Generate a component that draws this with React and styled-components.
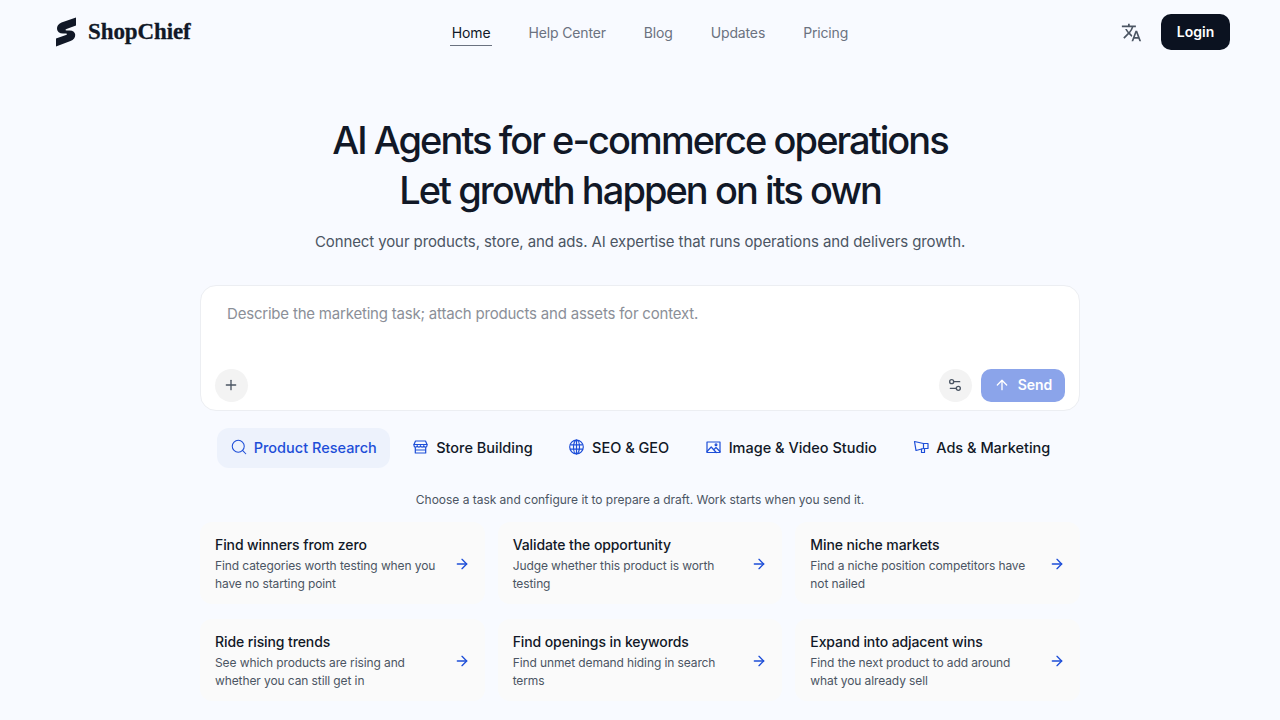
import React from "react";
import styled, { createGlobalStyle } from "styled-components";
import { ArrowRight, ArrowUp, Plus, Search, Settings2 } from "lucide-react";
import { MdTranslate } from "react-icons/md";

const GlobalStyle = createGlobalStyle`
  * { box-sizing: border-box; }
  html, body { margin: 0; padding: 0; }
  body {
    background: #f8faff;
    color: #111827;
    font-family: Inter, "Liberation Sans", sans-serif;
    height: 720px;
    overflow: hidden;
  }
`;

/* ----- header ----- */
const Header = styled.header`
  display: grid;
  grid-template-columns: 1fr auto 1fr;
  align-items: center;
  height: 64px;
  padding: 0 50px 0 55px;
`;

const LogoWrap = styled.div`
  display: flex;
  align-items: center;
  gap: 11px;
`;

const LogoText = styled.span`
  font-family: "Liberation Serif", serif;
  font-weight: 700;
  font-size: 23px;
  letter-spacing: -0.1px;
  color: #111827;
  -webkit-text-stroke: 0.3px #111827;
`;

const Nav = styled.nav`
  display: flex;
  gap: 34px;
  padding: 2px 0 0 15px;
`;

const NavLink = styled.a`
  font-size: 14px;
  line-height: 24px;
  padding: 0 2px;
  letter-spacing: -0.15px;
  color: ${({ $active }) => ($active ? "#111827" : "#6b7280")};
  border-bottom: 1px solid ${({ $active }) => ($active ? "#6b7280" : "transparent")};
`;

const HeaderRight = styled.div`
  display: flex;
  justify-content: flex-end;
  align-items: center;
  gap: 19px;
  color: #4b5563;
`;

const LoginBtn = styled.button`
  width: 69px;
  height: 36px;
  border: 0;
  border-radius: 10px;
  padding: 0 0 2px;
  background: #0b1220;
  color: #fff;
  font: 600 14px Inter, sans-serif;
`;

/* ----- hero ----- */
const Main = styled.main`
  width: 880px;
  margin: 0 auto;
  padding-top: 51px;
`;

const Title = styled.h1`
  margin: 0;
  text-align: center;
  font-size: 38px;
  line-height: 50px;
  font-weight: 500;
  letter-spacing: -1.95px;
  color: #111827;
`;

const Subtitle = styled.p`
  margin: 15px 0 0;
  text-align: center;
  font-size: 15px;
  line-height: 24px;
  letter-spacing: -0.1px;
  color: #4b5563;
`;

/* ----- composer ----- */
const Composer = styled.div`
  margin-top: 31px;
  height: 126px;
  background: #fff;
  border: 1px solid #eceef2;
  border-radius: 16px;
  padding: 17px 14px 8px;
  display: flex;
  flex-direction: column;
  justify-content: space-between;
`;

const Placeholder = styled.div`
  padding-left: 12px;
  font-size: 15px;
  line-height: 22px;
  letter-spacing: -0.2px;
  color: #8b8f98;
`;

const ComposerBar = styled.div`
  display: flex;
  align-items: center;
  gap: 9px;
`;

const RoundBtn = styled.button`
  width: 33px;
  height: 33px;
  border: 0;
  border-radius: 50%;
  background: #f3f3f3;
  color: #4b5563;
  display: flex;
  align-items: center;
  justify-content: center;
  padding: 0 1px 1px 0;
  margin-left: ${({ $push }) => ($push ? "auto" : "0")};
`;

const SendBtn = styled.button`
  width: 84px;
  height: 33px;
  border: 0;
  border-radius: 10px;
  padding: 0 0 2px;
  background: #8ba4ea;
  color: #fff;
  font: 600 14px Inter, sans-serif;
  display: flex;
  align-items: center;
  justify-content: center;
  gap: 8px;
`;

/* ----- tabs ----- */
const Tabs = styled.div`
  display: flex;
  justify-content: center;
  gap: 8.4px;
  margin-top: 17px;
`;

const Tab = styled.button`
  height: 40px;
  padding: 0 13px 2px 15px;
  border: 0;
  border-radius: 12px;
  background: ${({ $active }) => ($active ? "#edf2fc" : "transparent")};
  color: ${({ $active }) => ($active ? "#1d4ed8" : "#111827")};
  font: 500 14.5px Inter, sans-serif;
  display: flex;
  align-items: center;
  gap: 7px;
  svg {
    color: #1d4ed8;
  }
`;

const SearchGlyph = styled(Search)`
  margin: 0 -1px 0 -2px;
`;

const Hint = styled.p`
  margin: 22px 0 0;
  text-align: center;
  font-size: 12px;
  line-height: 20px;
  letter-spacing: -0.025px;
  color: #4b5563;
`;

/* ----- task cards ----- */
const Grid = styled.div`
  display: grid;
  grid-template-columns: repeat(3, 1fr);
  gap: 15px 13px;
  margin-top: 12px;
`;

const Card = styled.div`
  height: 82px;
  padding: 14px 14px 0 15px;
  background: #fafafa;
  border-radius: 12px;
  display: flex;
  align-items: flex-start;
  justify-content: space-between;
`;

const CardBody = styled.div`
  width: 224px;
`;

const CardTitle = styled.div`
  font-size: 14px;
  line-height: 18px;
  font-weight: 500;
  letter-spacing: -0.1px;
  color: #111827;
`;

const CardText = styled.div`
  margin-top: 3px;
  font-size: 12px;
  line-height: 18px;
  letter-spacing: -0.1px;
  color: #4b5563;
`;

const CardArrow = styled.span`
  display: flex;
  align-self: center;
  margin: -13px 1px 0 0;
  color: #1d4ed8;
`;

/* ----- drawn icons ----- */
const TabSvg = ({ children }) => (
  <svg
    width="16"
    height="16"
    viewBox="0 0 16 16"
    fill="none"
    stroke="currentColor"
    strokeWidth="1.2"
    strokeLinejoin="round"
    strokeLinecap="round"
  >
    {children}
  </svg>
);

const StoreIcon = () => (
  <TabSvg>
    <path d="M2.5 2h10l1.5 3.5v1a1.6 1.6 0 0 1-3.2 0 1.65 1.65 0 0 1-3.3 0 1.65 1.65 0 0 1-3.3 0 1.6 1.6 0 0 1-3.2 0v-1z" />
    <path d="M1 5.5h13M2.3 8.5V14h10.4V8.5M2.3 11h10.4" />
  </TabSvg>
);

const GlobeIcon = () => (
  <TabSvg>
    <circle cx="7.5" cy="8" r="6.8" />
    <ellipse cx="7.5" cy="8" rx="3" ry="6.8" />
    <path d="M7.5 1.2v13.6M1.5 5.8h12M1.5 10.2h12" />
  </TabSvg>
);

const ImageIcon = () => (
  <TabSvg>
    <path d="M1 3h13v10.5H1z" />
    <path d="M1 12.5l4.2-4.5 5 5.5M8 10.5l2-2 4 4" />
    <circle cx="10" cy="5.8" r="0.9" />
  </TabSvg>
);

const MegaphoneIcon = () => (
  <TabSvg>
    <path d="M1.5 2.5l9 2h4.5v5h-4.5l-7.5 2z" />
    <path d="M10.5 4.5v5M8.5 10v3.5h3V9.5" />
  </TabSvg>
);

const tabs = [
  { label: "Product Research", icon: <SearchGlyph size={18} strokeWidth={1.4} />, active: true },
  { label: "Store Building", icon: <StoreIcon /> },
  { label: "SEO & GEO", icon: <GlobeIcon /> },
  { label: "Image & Video Studio", icon: <ImageIcon /> },
  { label: "Ads & Marketing", icon: <MegaphoneIcon /> },
];

const tasks = [
  ["Find winners from zero", "Find categories worth testing when you have no starting point"],
  ["Validate the opportunity", "Judge whether this product is worth testing"],
  ["Mine niche markets", "Find a niche position competitors have not nailed"],
  ["Ride rising trends", "See which products are rising and whether you can still get in"],
  ["Find openings in keywords", "Find unmet demand hiding in search terms"],
  ["Expand into adjacent wins", "Find the next product to add around what you already sell"],
];

const Logo = () => (
  <svg width="22" height="30" viewBox="0 0 22 30">
    <path
      fill="#111827"
      d="M21 0.5 V8.5 L11.5 12 C10 12.6 10.2 13.4 11.5 13.4 H14.5 C22 13.4 22 21.5 15.5 24 L1 29.5 V21.5 L11 18 C12.5 17.4 12.3 16.6 11 16.6 H8 C0.5 16.6 0 8 6.5 5.5 Z"
    />
  </svg>
);

export default function App() {
  return (
    <>
      <GlobalStyle />
      <Header>
        <LogoWrap>
          <Logo />
          <LogoText>ShopChief</LogoText>
        </LogoWrap>
        <Nav>
          <NavLink $active>Home</NavLink>
          <NavLink>Help Center</NavLink>
          <NavLink>Blog</NavLink>
          <NavLink>Updates</NavLink>
          <NavLink>Pricing</NavLink>
        </Nav>
        <HeaderRight>
          <MdTranslate size={21} />
          <LoginBtn>Login</LoginBtn>
        </HeaderRight>
      </Header>
      <Main>
        <Title>
          AI Agents for e-commerce operations
          <br />
          Let growth happen on its own
        </Title>
        <Subtitle>
          Connect your products, store, and ads. AI expertise that runs operations and delivers growth.
        </Subtitle>
        <Composer>
          <Placeholder>Describe the marketing task; attach products and assets for context.</Placeholder>
          <ComposerBar>
            <RoundBtn>
              <Plus size={16} />
            </RoundBtn>
            <RoundBtn $push>
              <Settings2 size={16} />
            </RoundBtn>
            <SendBtn>
              <ArrowUp size={16} />
              Send
            </SendBtn>
          </ComposerBar>
        </Composer>
        <Tabs>
          {tabs.map(({ label, icon, active }) => (
            <Tab key={label} $active={active}>
              {icon}
              {label}
            </Tab>
          ))}
        </Tabs>
        <Hint>Choose a task and configure it to prepare a draft. Work starts when you send it.</Hint>
        <Grid>
          {tasks.map(([title, text]) => (
            <Card key={title}>
              <CardBody>
                <CardTitle>{title}</CardTitle>
                <CardText>{text}</CardText>
              </CardBody>
              <CardArrow>
                <ArrowRight size={16} />
              </CardArrow>
            </Card>
          ))}
        </Grid>
      </Main>
    </>
  );
}
